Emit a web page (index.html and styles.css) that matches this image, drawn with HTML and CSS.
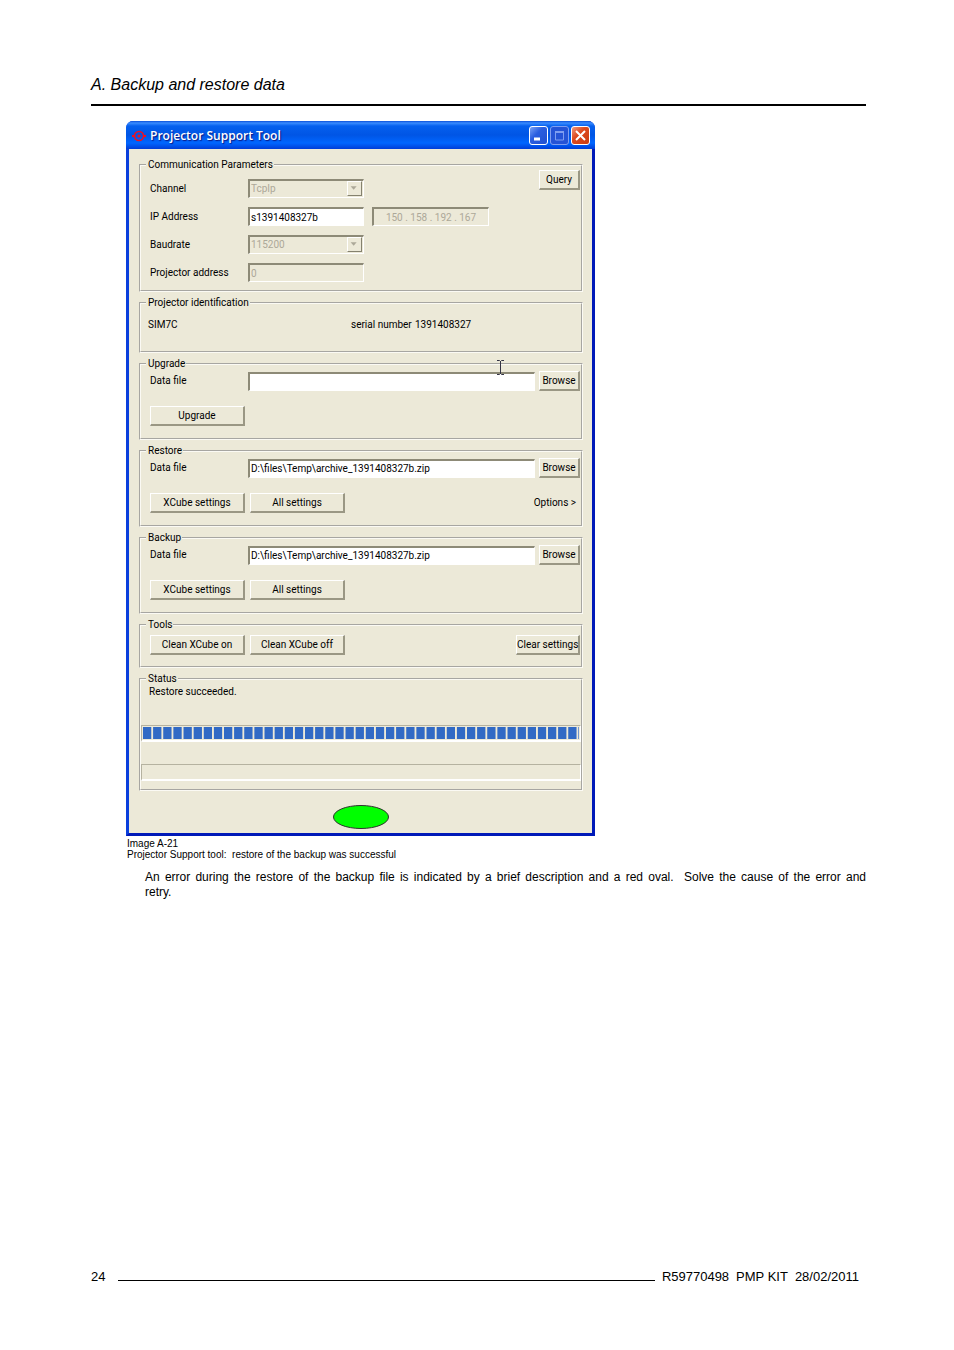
FILE: index.html
```html
<!DOCTYPE html>
<html lang="en">
<head>
    <meta charset="UTF-8">
    <title>A. Backup and restore data</title>
    <link rel="stylesheet" href="styles.css">
</head>
<body>
    <header class="page-header">
        <h1>A. Backup and restore data</h1>
    </header>
    <main>
        <figure>
            <div class="window">
                <div class="title-bar">
                    <svg class="app-icon" width="14" height="12" viewBox="0 0 14 12">
                        <circle cx="7" cy="6" r="4.5" fill="none" stroke="#f01020" stroke-width="1.6"/>
                        <circle cx="7" cy="6" r="1.6" fill="#f01020"/>
                        <path d="M0 6h3M11 6h3" stroke="#f01020" stroke-width="2"/>
                    </svg>
                    <h2>Projector Support Tool</h2>
                    <button class="win-btn" aria-label="Minimize">
                        <svg width="17" height="17" viewBox="0 0 17 17"><path d="M4 12h6" stroke="#fff" stroke-width="3"/></svg>
                    </button>
                    <button class="win-btn dim" aria-label="Maximize" disabled>
                        <svg width="17" height="17" viewBox="0 0 17 17"><path d="M4 4.5h9M4.5 4v9h8V4" fill="none" stroke="#7f9df0" stroke-width="1"/><path d="M4 5h9" stroke="#7f9df0" stroke-width="2"/></svg>
                    </button>
                    <button class="win-btn close" aria-label="Close">
                        <svg width="17" height="17" viewBox="0 0 17 17"><path d="M4 4l9 9M13 4l-9 9" stroke="#fff" stroke-width="2"/></svg>
                    </button>
                </div>
                <form class="window-body">
                    <fieldset class="comm">
                        <legend>Communication Parameters</legend>
                        <div class="split">
                            <div class="params">
                                <label for="channel">Channel</label>
                                <span class="combo">
                                    <select id="channel" disabled><option>TcpIp</option></select>
                                    <svg width="15" height="15" viewBox="0 0 15 15"><path d="M3 5h7l-3.5 4z" fill="#aca899"/></svg>
                                </span>
                                <label for="ip">IP Address</label>
                                <input id="ip" type="text" value="s1391408327b">
                                <input class="octets" type="text" value="150 . 158 . 192 . 167" aria-label="Resolved IP address" disabled>
                                <label for="baud">Baudrate</label>
                                <span class="combo">
                                    <select id="baud" disabled><option>115200</option></select>
                                    <svg width="15" height="15" viewBox="0 0 15 15"><path d="M3 5h7l-3.5 4z" fill="#aca899"/></svg>
                                </span>
                                <label for="address">Projector address</label>
                                <input id="address" type="text" value="0" disabled>
                            </div>
                            <button type="button" class="btn small">Query</button>
                        </div>
                    </fieldset>

                    <fieldset class="ident">
                        <legend>Projector identification</legend>
                        <div class="ident-row">
                            <span>SIM7C</span>
                            <span>serial number</span>
                            <span>1391408327</span>
                        </div>
                    </fieldset>

                    <fieldset class="files">
                        <legend>Upgrade</legend>
                        <div class="file-row">
                            <label for="upgrade-file">Data file</label>
                            <input id="upgrade-file" type="text">
                            <button type="button" class="btn small">Browse</button>
                        </div>
                        <div class="btn-row">
                            <button type="button" class="btn">Upgrade</button>
                        </div>
                        <svg class="ibeam" width="9" height="15" viewBox="0 0 9 15"><path d="M1 .5h2.500l1 1 1-1H8M4.500 1v13M1 14.500h2.500l1-1 1 1H8" fill="none" stroke="#333344"/></svg>
                    </fieldset>

                    <fieldset class="files">
                        <legend>Restore</legend>
                        <div class="file-row">
                            <label for="restore-file">Data file</label>
                            <input id="restore-file" type="text" value="D:\files\Temp\archive_1391408327b.zip">
                            <button type="button" class="btn small">Browse</button>
                        </div>
                        <div class="btn-row">
                            <button type="button" class="btn">XCube settings</button>
                            <button type="button" class="btn">All settings</button>
                            <button type="button" class="options">Options &gt;</button>
                        </div>
                    </fieldset>

                    <fieldset class="files">
                        <legend>Backup</legend>
                        <div class="file-row">
                            <label for="backup-file">Data file</label>
                            <input id="backup-file" type="text" value="D:\files\Temp\archive_1391408327b.zip">
                            <button type="button" class="btn small">Browse</button>
                        </div>
                        <div class="btn-row">
                            <button type="button" class="btn">XCube settings</button>
                            <button type="button" class="btn">All settings</button>
                        </div>
                    </fieldset>

                    <fieldset class="tools">
                        <legend>Tools</legend>
                        <div class="btn-row">
                            <button type="button" class="btn">Clean XCube on</button>
                            <button type="button" class="btn">Clean XCube off</button>
                            <button type="button" class="btn clear">Clear settings</button>
                        </div>
                    </fieldset>

                    <fieldset class="status">
                        <legend>Status</legend>
                        <p>Restore succeeded.</p>
                        <progress value="43" max="43" aria-label="Step progress"></progress>
                        <progress value="0" max="43" aria-label="Total progress"></progress>
                    </fieldset>

                    <svg class="lamp" width="56" height="24" viewBox="0 0 56 24"><ellipse cx="28" cy="12" rx="27.500" ry="11.500" fill="#00ff00" stroke="#303030"/></svg>
                </form>
            </div>
            <figcaption>Image A-21<br>Projector Support tool: &nbsp;restore of the backup was successful</figcaption>
        </figure>
        <p class="note"><span class="full-line">An error during the restore of the backup file is indicated by a brief description and a red oval. &nbsp;Solve the cause of the error and</span> retry.</p>
    </main>
    <footer>
        <span>24</span>
        <hr>
        <span>R59770498</span>
        <span>PMP KIT</span>
        <span>28/02/2011</span>
    </footer>
</body>
</html>
```
FILE: styles.css
```css
* {
    box-sizing: border-box;
}
body {
    display: flex;
    flex-direction: column;
    min-height: 100vh;
    margin: 0;
    padding: 74px 88px 65px 91px;
    background: #fff;
    color: #000;
    font-family: "Liberation Sans", Arial, sans-serif;
    font-size: 13px;
}
.page-header {
    border-bottom: 2px solid #000;
    padding-bottom: 8px;
}
h1 {
    margin: 0;
    font-size: 16px;
    line-height: 22px;
    font-weight: normal;
    font-style: italic;
}
main {
    flex: 1;
}
figure {
    margin: 15px 0 0 35px;
}
figcaption {
    margin: 2px 0 0 1px;
    font-size: 10px;
    line-height: 11px;
}
.note {
    margin: 10px 0 0 54px;
    line-height: 15px;
    font-size: 12px;
}
.full-line {
    display: block;
    text-align: justify;
    text-align-last: justify;
}
footer {
    display: flex;
    align-items: center;
    gap: 7px;
    padding-right: 7px;
    line-height: 16px;
}
footer hr {
    flex: 1;
    margin: 7px 0 0 6px;
    border: 0;
    border-top: 1px solid #000;
}

/* window frame */
.window {
    max-width: 469px;
    border: 3px solid #0a3fdc;
    border-top: 0;
    border-right-color: #0019b8;
    border-bottom-color: #0019b8;
    border-radius: 7px 7px 0 0;
    background: #0a3fdc;
    font-family: Roboto, "Liberation Sans", sans-serif;
    font-size: 10px;
    line-height: 14px;
}
.title-bar {
    display: flex;
    align-items: center;
    gap: 2px;
    height: 28px;
    margin: 0 -3px;
    padding: 1px 5px 0 6px;
    border-radius: 7px 7px 0 0;
    background: linear-gradient(#0a4fd8, #3a8cff 2px, #0560ee 5px, #0055e5 14px, #0066ff 22px, #003dd7);
}
.title-bar h2 {
    flex: 1;
    margin: 0 0 0 2px;
    color: #fff;
    font: 600 12px/16px "Open Sans", sans-serif;
    text-shadow: 1px 1px 1px #0a1883;
}
.win-btn {
    width: 19px;
    height: 19px;
    padding: 0;
    border: 1px solid #fff;
    border-radius: 3px;
    background: linear-gradient(135deg, #7ba2f5, #2a5ee0 40%, #2050d0);
}
.win-btn svg {
    display: block;
}
.win-btn.dim {
    border-color: #7f9df0;
    background: #2553d6;
}
.win-btn.close {
    background: linear-gradient(135deg, #f09a80, #dd4a20 40%, #cc3c10);
}
.window-body {
    display: flex;
    flex-direction: column;
    gap: 5px;
    padding: 10px 9px 4px 10px;
    background: #ece9d8;
}

/* group boxes */
fieldset {
    min-width: 0;
    margin: 0;
    padding: 0 1px 0 9px;
    border: 2px groove #fbfaf4;
}
legend {
    margin-left: -4px;
    padding: 0 1px 0 2px;
    line-height: 12px;
}
.comm {
    height: 133px;
}
.split {
    display: flex;
    justify-content: space-between;
    align-items: flex-start;
    margin-top: -1px;
}
.params {
    display: grid;
    grid-template-columns: 90px 116px 117px;
    grid-auto-rows: 19px;
    gap: 9px 8px;
    padding-top: 9px;
}
.params label {
    grid-column: 1;
    line-height: 19px;
}
.octets {
    text-align: center;
}
.ident {
    height: 56px;
    padding-left: 7px;
}
.ident legend {
    margin-left: -2px;
}
.ident-row {
    display: grid;
    grid-template-columns: 203px 64px 1fr;
    padding-top: 9px;
}
.files {
    position: relative;
    height: 82px;
}
.file-row {
    display: flex;
    align-items: center;
    padding-top: 1px;
}
.file-row label {
    width: 98px;
}
.file-row input {
    flex: 1;
    min-width: 0;
    margin-right: 4px;
}
.btn-row {
    display: flex;
    align-items: center;
    gap: 5px;
    margin-top: 15px;
}
.tools {
    height: 49px;
}
.tools .btn-row {
    margin-top: 4px;
}
.status {
    height: 118px;
    padding: 0;
}
.status legend {
    margin-left: 5px;
}
.status p {
    margin: 0 0 26px 8px;
}

/* controls */
input, select, .btn, .options {
    height: 19px;
    border-radius: 0;
    font: inherit;
    color: #000;
}
input, select {
    width: 100%;
    padding: 0 1px;
    border: solid;
    border-width: 2px 1px 1px 2px;
    border-color: #8d8a77 #fff #fff #8d8a77;
    background: #fff;
}
input:disabled, select:disabled {
    background: #ece9d8;
    color: #aca899;
    opacity: 1;
}
select {
    appearance: none;
}
.combo {
    position: relative;
}
.combo svg {
    position: absolute;
    top: 2px;
    right: 2px;
    border: 1px solid;
    border-color: #fff #85826f #85826f #fff;
    background: #ece9d8;
}
.btn {
    width: 95px;
    height: 20px;
    padding: 0;
    border: solid;
    border-width: 1px 2px 2px 1px;
    border-color: #fff #9a9784 #9a9784 #fff;
    background: #ece9d8;
    white-space: nowrap;
}
.btn.small {
    width: 41px;
}
.btn.clear {
    width: 64px;
    margin-left: auto;
}
.options {
    margin: 0 4px 0 auto;
    padding: 0;
    border: 0;
    background: none;
}
progress {
    display: block;
    appearance: none;
    width: 100%;
    height: 17px;
    padding: 1px;
    border: 1px solid;
    border-color: #b5b2a0 #fff #fff #b5b2a0;
    border-bottom-width: 2px;
}
progress + progress {
    margin-top: 22px;
}
progress::-webkit-progress-bar {
    background: #ece9d8;
}
progress::-webkit-progress-value {
    background: linear-gradient(to right, #316ac5 8px, #ece9d8 8px) 0 0 / calc(100% / 43) 100%;
}

/* mouse pointer and state lamp */
.ibeam {
    position: absolute;
    top: -10px;
    right: 76px;
}
.lamp {
    display: block;
    margin: 9px auto 0;
}
```
